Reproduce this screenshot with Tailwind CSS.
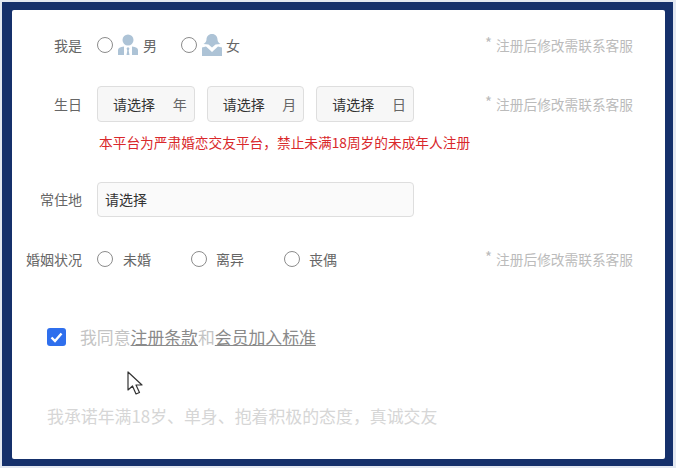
<!DOCTYPE html>
<html lang="zh-CN">
<head>
  <meta charset="UTF-8" />
  <title>注册</title>
  <script src="https://cdn.jsdelivr.net/npm/@tailwindcss/browser@4"></script>
</head>
<body class="font-['Noto_Sans_CJK_SC','Noto_Sans',sans-serif]">
  <div class="relative w-[676px] h-[468px] overflow-hidden bg-[#e3e8f1] pt-[2px] pl-[2px] pr-[3px] pb-[2px]">
    <div class="w-full h-full bg-[#15306b] pt-[8px] pl-[10px] pr-[8px] pb-[7px]">
      <div class="w-[653px] h-[449px] bg-white rounded-[2px] pt-[17px] pr-[32px] text-[14px] text-[#666]">

        <!-- 性别 -->
        <div class="flex items-center h-[36px]">
          <div class="w-[70px] text-right">我是</div>
          <div class="flex items-center ml-[15px]">
            <span class="w-[16px] h-[16px] rounded-full border-[1.5px] border-[#8c8c8c]"></span>
            <svg class="ml-[5px]" width="20" height="22" viewBox="0 0 20 22">
              <circle cx="10" cy="6" r="5.500" fill="#adc3d6"/>
              <path d="M0 21v-5c0-2 2-3 6-3.500v8.500zM20 21v-5c0-2-2-3-6-3.500v8.500z" fill="#adc3d6"/>
              <path d="M10 13l1.500 1.500-.8 2 .8 4.500h-3l.8-4.500-.8-2z" fill="#adc3d6"/>
            </svg>
            <span class="ml-[5px]">男</span>
          </div>
          <div class="flex items-center ml-[24px]">
            <span class="w-[16px] h-[16px] rounded-full border-[1.5px] border-[#8c8c8c]"></span>
            <svg class="ml-[5px]" width="20" height="22" viewBox="0 0 20 22">
              <path d="M10 0c3.500 0 5.500 2.500 5.500 5.500 0 2 1.500 3.500 3 4.500l-5 .5-3.500 3-3.500-3-5-.5c1.500-1 3-2.500 3-4.500C4.500 2.500 6.500 0 10 0z" fill="#adc3d6"/>
              <path d="M0 22v-8.500l4-1 6 5.500 6-5.500 4 1v8.500z" fill="#adc3d6"/>
            </svg>
            <span class="ml-[4px]">女</span>
          </div>
          <div class="ml-auto text-[13.7px] text-[#bbb]"><span class="relative -top-[2px] mr-[4px] text-[15px]">*</span>注册后修改需联系客服</div>
        </div>

        <!-- 生日 -->
        <div class="flex items-center h-[36px] mt-[23px]">
          <div class="w-[70px] text-right">生日</div>
          <div class="flex items-center gap-[12px] ml-[15px]">
            <div class="flex items-center justify-between w-[97.67px] h-[36px] pl-[15px] pr-[7px] bg-[#f7f7f7] border border-[#dedede] rounded-[4px] text-[#333]">请选择<span class="text-[#666]">年</span></div>
            <div class="flex items-center justify-between w-[97.67px] h-[36px] pl-[15px] pr-[7px] bg-[#f7f7f7] border border-[#dedede] rounded-[4px] text-[#333]">请选择<span class="text-[#666]">月</span></div>
            <div class="flex items-center justify-between w-[97.67px] h-[36px] pl-[15px] pr-[7px] bg-[#f7f7f7] border border-[#dedede] rounded-[4px] text-[#333]">请选择<span class="text-[#666]">日</span></div>
          </div>
          <div class="ml-auto text-[13.7px] text-[#bbb]"><span class="relative -top-[2px] mr-[4px] text-[15px]">*</span>注册后修改需联系客服</div>
        </div>
        <div class="h-[20px] mt-[10px] ml-[87px] leading-[20px] text-[13.7px] text-[#d9282b]">本平台为严肃婚恋交友平台，禁止未满18周岁的未成年人注册</div>

        <!-- 常住地 -->
        <div class="flex items-center h-[35px] mt-[30px]">
          <div class="w-[70px] text-right">常住地</div>
          <div class="flex items-center w-[317px] h-[35px] ml-[15px] pl-[7px] bg-[#fafafa] border border-[#dedede] rounded-[4px] text-[#333]">请选择</div>
        </div>

        <!-- 婚姻状况 -->
        <div class="flex items-center h-[36px] mt-[24px]">
          <div class="w-[70px] text-right">婚姻状况</div>
          <div class="flex items-center ml-[15px] w-[94px]">
            <span class="w-[16px] h-[16px] rounded-full border-[1.5px] border-[#8c8c8c]"></span>
            <span class="ml-[10px]">未婚</span>
          </div>
          <div class="flex items-center w-[93px]">
            <span class="w-[16px] h-[16px] rounded-full border-[1.5px] border-[#8c8c8c]"></span>
            <span class="ml-[9px]">离异</span>
          </div>
          <div class="flex items-center">
            <span class="w-[16px] h-[16px] rounded-full border-[1.5px] border-[#8c8c8c]"></span>
            <span class="ml-[9px]">丧偶</span>
          </div>
          <div class="ml-auto text-[13.7px] text-[#bbb]"><span class="relative -top-[2px] mr-[4px] text-[15px]">*</span>注册后修改需联系客服</div>
        </div>

        <!-- 协议 -->
        <div class="flex items-center h-[24px] mt-[48px] ml-[35px]">
          <span class="flex items-center justify-center w-[19px] h-[18px] bg-[#2f6fed] rounded-[3px]">
            <svg width="13" height="11" viewBox="0 0 13 11"><path d="M1.500 5.500l3.500 3.500 6.500-7.500" fill="none" stroke="#fff" stroke-width="2.400"/></svg>
          </span>
          <span class="ml-[14px] text-[16.85px] text-[#c4c4c4]">我同意<span class="text-[#8a8a8a] underline">注册条款</span>和<span class="text-[#8a8a8a] underline">会员加入标准</span></span>
        </div>
        <div class="h-[24px] mt-[55px] ml-[35px] leading-[24px] text-[16.9px] text-[#d6d6d6]">我承诺年满18岁、单身、抱着积极的态度，真诚交友</div>
      </div>
    </div>

    <!-- 鼠标指针 -->
    <svg class="absolute left-[127px] top-[371px]" width="18" height="24" viewBox="0 0 18 24">
      <path d="M1 1v18l4.500-4 3.500 8 3.500-1.500-3.500-7.500h6z" fill="#fff" stroke="#333" stroke-width="1.200" stroke-linejoin="round"/>
    </svg>
  </div>
</body>
</html>
